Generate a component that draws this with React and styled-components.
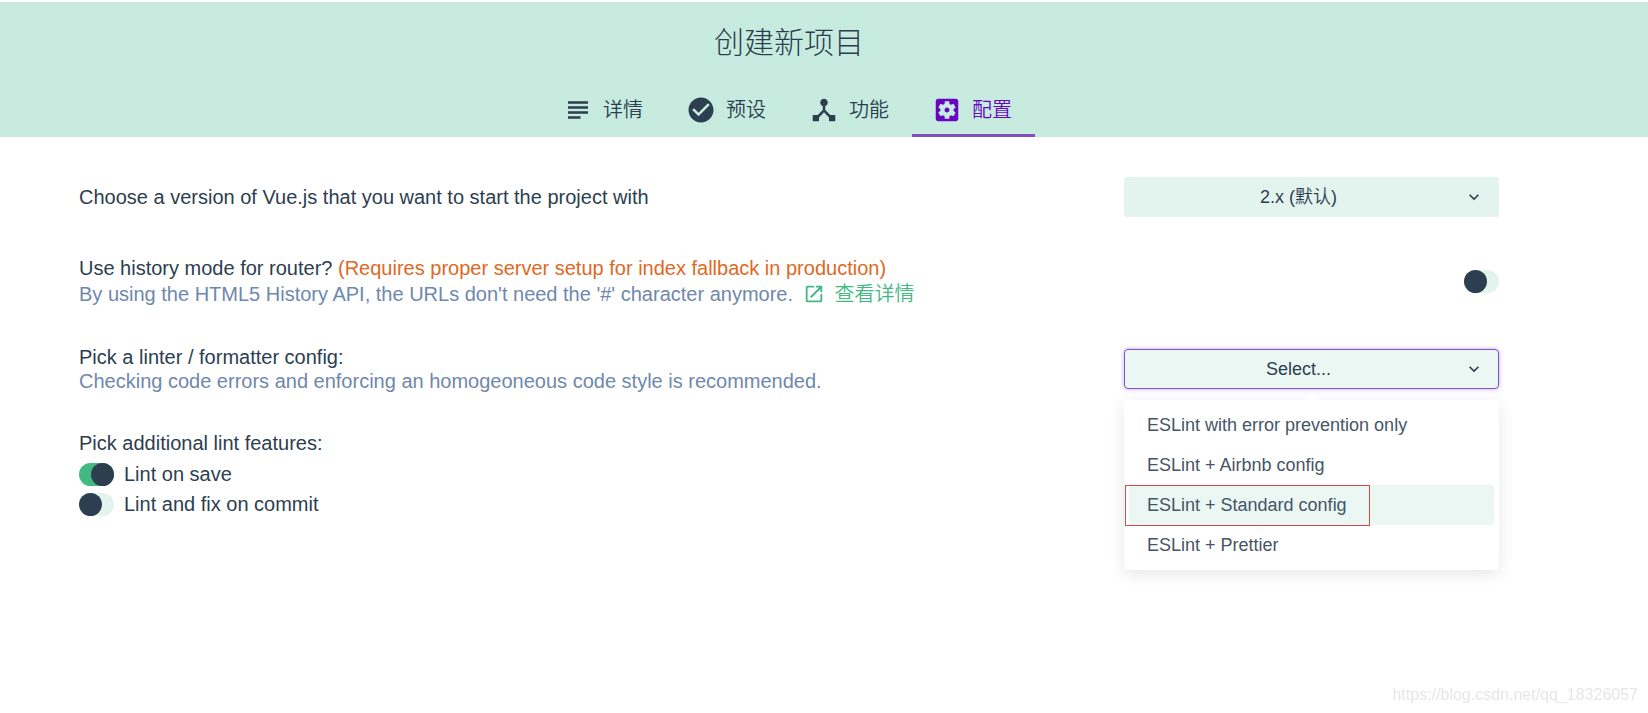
import React, { useState } from 'react'
import styled, { createGlobalStyle, ThemeProvider } from 'styled-components'
import {
  MdSubject,
  MdCheckCircle,
  MdDeviceHub,
  MdOpenInNew,
  MdKeyboardArrowDown,
} from 'react-icons/md'

const theme = {
  colors: {
    text: '#2c3e50',
    muted: '#6f88ac',
    header: '#c7ecdf',
    field: '#e3f4ee',
    fieldOpen: '#ebf7f3',
    green: '#42b983',
    orange: '#e0691f',
    purple: '#6806c1',
    outline: '#7f56c5',
    mark: '#d9464b',
  },
}

const GlobalStyle = createGlobalStyle`
  *, *::before, *::after {
    box-sizing: border-box;
  }

  body {
    margin: 0;
    background: #fff;
    color: #2c3e50;
    font-family: 'Liberation Sans', 'Noto Sans CJK SC', sans-serif;
    font-size: 20px;
  }

  button, select, input {
    font-family: inherit;
    color: inherit;
  }
`

const Page = styled.div`
  min-height: 100vh;
  padding-top: 2px;
`

const Header = styled.header`
  display: flex;
  flex-direction: column;
  align-items: center;
  padding-right: 70px;
  background: ${({ theme }) => theme.colors.header};
`

const Title = styled.h1`
  margin: 0;
  padding: 21px 0 19px;
  font-weight: 300;
  font-size: 30px;
  line-height: 40px;
`

const Tabs = styled.nav`
  display: flex;
`

const Tab = styled.button`
  display: flex;
  align-items: center;
  gap: 10px;
  height: 55px;
  padding: 3px 23px 0 20px;
  border: 0;
  border-bottom: 3px solid ${({ $active }) => $active ? '#8450bf' : 'transparent'};
  background: none;
  color: ${({ $active, theme }) => $active ? theme.colors.purple : theme.colors.text};
  font-weight: 350;
  font-size: 20px;
  line-height: 28px;
  cursor: pointer;
`

const Main = styled.main`
  display: flex;
  flex-direction: column;
  gap: 38px;
  padding: 40px 149px 40px 79px;
`

const Row = styled.div`
  display: flex;
  align-items: center;
  justify-content: space-between;
`

const Line = styled.p`
  margin: 0;
  line-height: ${({ $tall }) => $tall ? '26px' : '24px'};
  color: ${({ $muted, theme }) => $muted ? theme.colors.muted : theme.colors.text};
`

const Warning = styled.span`
  color: ${({ theme }) => theme.colors.orange};
`

const DetailLink = styled.a`
  display: inline-flex;
  align-items: center;
  gap: 10px;
  height: 26px;
  margin-left: 4px;
  vertical-align: top;
  color: ${({ theme }) => theme.colors.green};
  font-weight: 350;
  text-decoration: none;
`

const Field = styled.div`
  position: relative;
  width: 375px;
`

const SelectBox = styled.select`
  display: block;
  width: 100%;
  height: 40px;
  padding: 0 36px 0 10px;
  border: 0;
  border-radius: 3px;
  outline: 0;
  appearance: none;
  background: ${({ theme }) => theme.colors.field};
  font-weight: 350;
  font-size: 18px;
  text-align: center;
  text-align-last: center;
`

const Trigger = styled.button`
  display: block;
  width: 100%;
  height: 40px;
  padding: 0 35px 0 9px;
  border: 1px solid ${({ theme }) => theme.colors.outline};
  border-radius: 4px;
  background: ${({ theme }) => theme.colors.fieldOpen};
  box-shadow: 0 0 4px #c9a0f5;
  font-size: 18px;
  text-align: center;
`

const Arrow = styled(MdKeyboardArrowDown)`
  position: absolute;
  top: 10px;
  right: 15px;
  pointer-events: none;
`

const Menu = styled.ul`
  position: absolute;
  top: 51px;
  left: 0;
  width: 100%;
  margin: 0;
  padding: 5px;
  border-radius: 4px;
  background: #fff;
  box-shadow: 0 4px 16px rgba(0, 0, 0, 0.1);
  list-style: none;

  &::before {
    content: '';
    position: absolute;
    top: -8px;
    left: calc(50% - 8px);
    border: 8px solid transparent;
    border-top: 0;
    border-bottom-color: #fff;
  }
`

const Option = styled.li`
  position: relative;
  height: 40px;
  padding: 0 18px;
  border-radius: 3px;
  background: ${({ $hovered, theme }) => $hovered ? theme.colors.fieldOpen : 'transparent'};
  color: #465567;
  font-size: 18px;
  line-height: 40px;
  cursor: pointer;
`

const Mark = styled.span`
  position: absolute;
  top: 0;
  left: -4px;
  width: 245px;
  height: 41px;
  border: 1px solid ${({ theme }) => theme.colors.mark};
  pointer-events: none;
`

const Features = styled.fieldset`
  display: flex;
  flex-direction: column;
  gap: 7px;
  margin: 0;
  padding: 0;
  border: 0;
`

const Legend = styled.legend`
  margin-bottom: 8px;
  padding: 0;
  line-height: 24px;
`

const Feature = styled.label`
  display: flex;
  align-items: center;
  align-self: flex-start;
  gap: 10px;
  line-height: 23px;
`

const Switch = styled.input`
  flex-shrink: 0;
  width: 35px;
  height: 23px;
  margin: 0;
  border-radius: 12px;
  appearance: none;
  background: ${({ theme }) => theme.colors.field};
  cursor: pointer;

  &::before {
    content: '';
    display: block;
    width: 23px;
    height: 23px;
    border-radius: 50%;
    background: ${({ theme }) => theme.colors.text};
  }

  &:checked {
    background: ${({ theme }) => theme.colors.green};
  }

  &:checked::before {
    margin-left: auto;
  }
`

const Watermark = styled.div`
  position: fixed;
  right: 10px;
  bottom: 8px;
  color: #e6e6e6;
  font-size: 16px;
  line-height: 20px;
`

const SettingsIcon = () => (
  <svg width='30' height='30' viewBox='0 0 24 24' fill='currentColor' aria-hidden='true'>
    <path d='M12 10c-1.1 0-2 .9-2 2s.9 2 2 2 2-.9 2-2-.9-2-2-2zm7-7H5c-1.11 0-2 .9-2 2v14c0 1.1.89 2 2 2h14c1.11 0 2-.9 2-2V5c0-1.1-.89-2-2-2zm-1.75 9c0 .23-.02.46-.05.68l1.48 1.16c.13.11.17.3.08.45l-1.4 2.42c-.09.15-.27.21-.43.15l-1.74-.7c-.36.28-.76.51-1.18.69l-.26 1.85c-.03.17-.18.3-.35.3h-2.8c-.17 0-.32-.13-.35-.29l-.26-1.85c-.43-.18-.82-.41-1.18-.69l-1.74.7c-.16.06-.34 0-.43-.15l-1.4-2.42c-.09-.15-.05-.34.08-.45l1.48-1.16c-.03-.23-.05-.46-.05-.69 0-.23.02-.46.05-.68l-1.48-1.16c-.13-.11-.17-.3-.08-.45l1.4-2.42c.09-.15.27-.21.43-.15l1.74.7c.36-.28.76-.51 1.18-.69l.26-1.85c.03-.17.18-.3.35-.3h2.8c.17 0 .32.13.35.29l.26 1.85c.43.18.82.41 1.18.69l1.74-.7c.16-.06.34 0 .43.15l1.4 2.42c.09.15.05.34-.08.45l-1.48 1.16c.03.23.05.46.05.69z' />
  </svg>
)

const tabs = [
  { label: '详情', icon: <MdSubject size={30} /> },
  { label: '预设', icon: <MdCheckCircle size={30} /> },
  { label: '功能', icon: <MdDeviceHub size={30} /> },
  { label: '配置', icon: <SettingsIcon /> },
]

const linters = [
  'ESLint with error prevention only',
  'ESLint + Airbnb config',
  'ESLint + Standard config',
  'ESLint + Prettier',
]

const App = () => {
  const [tab, setTab] = useState('配置')
  const [isOpen, setOpen] = useState(true)
  const [linter, setLinter] = useState('Select...')
  const [hovered, setHovered] = useState(2)

  const pick = (name) => {
    setLinter(name)
    setOpen(false)
  }

  return (
    <ThemeProvider theme={theme}>
      <GlobalStyle />
      <Page>
        <Header>
          <Title>创建新项目</Title>
          <Tabs>
            {tabs.map(({ label, icon }) => (
              <Tab key={label} type='button' $active={label === tab} onClick={() => setTab(label)}>
                {icon}
                {label}
              </Tab>
            ))}
          </Tabs>
        </Header>
        <Main>
          <Row>
            <Line as='label' htmlFor='version'>
              Choose a version of Vue.js that you want to start the project with
            </Line>
            <Field>
              <SelectBox id='version' defaultValue='2'>
                <option value='2'>2.x (默认)</option>
              </SelectBox>
              <Arrow size={20} />
            </Field>
          </Row>
          <Row>
            <div>
              <Line $tall>
                <label htmlFor='history'>Use history mode for router?</label>{' '}
                <Warning>(Requires proper server setup for index fallback in production)</Warning>
              </Line>
              <Line $tall $muted>
                By using the HTML5 History API, the URLs don't need the '#' character anymore.{' '}
                <DetailLink href='#history'>
                  <MdOpenInNew size={22} />
                  查看详情
                </DetailLink>
              </Line>
            </div>
            <Switch type='checkbox' id='history' />
          </Row>
          <Row>
            <div>
              <Line id='linter-label'>Pick a linter / formatter config:</Line>
              <Line $muted>
                Checking code errors and enforcing an homogeoneous code style is recommended.
              </Line>
            </div>
            <Field>
              <Trigger
                type='button'
                aria-haspopup='listbox'
                aria-expanded={isOpen}
                aria-labelledby='linter-label linter'
                id='linter'
                onClick={() => setOpen(!isOpen)}>
                {linter}
              </Trigger>
              <Arrow size={20} />
              {isOpen && (
                <Menu role='listbox' aria-labelledby='linter-label'>
                  {linters.map((name, index) => (
                    <Option
                      key={name}
                      role='option'
                      aria-selected={name === linter}
                      $hovered={index === hovered}
                      onMouseEnter={() => setHovered(index)}
                      onClick={() => pick(name)}>
                      {name}
                      {index === 2 && <Mark />}
                    </Option>
                  ))}
                </Menu>
              )}
            </Field>
          </Row>
          <Features>
            <Legend>Pick additional lint features:</Legend>
            <Feature>
              <Switch type='checkbox' defaultChecked />
              Lint on save
            </Feature>
            <Feature>
              <Switch type='checkbox' />
              Lint and fix on commit
            </Feature>
          </Features>
        </Main>
        <Watermark>https://blog.csdn.net/qq_18326057</Watermark>
      </Page>
    </ThemeProvider>
  )
}

export default App
